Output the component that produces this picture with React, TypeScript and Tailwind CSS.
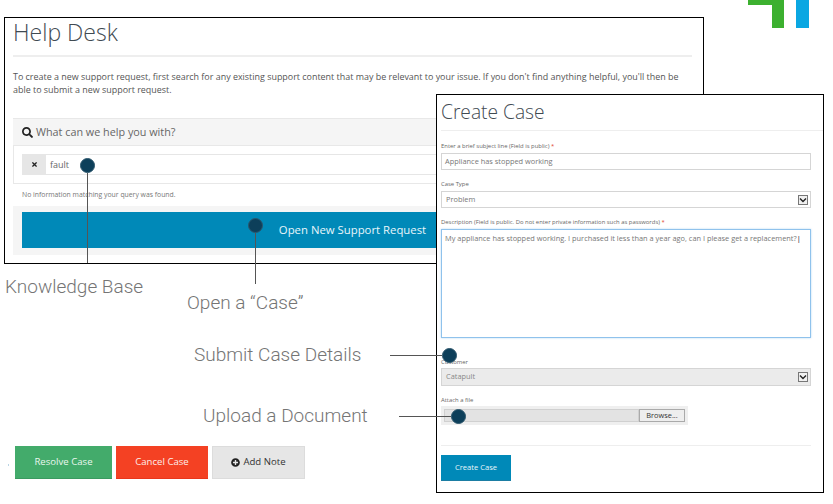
import type { ReactNode } from 'react'
import { FaPlusCircle, FaSearch, FaTimes } from 'react-icons/fa'

const body = { fontFamily: '"Open Sans", sans-serif' }

function Dot() {
  return <div className="size-[15px] shrink-0 rounded-full border border-[#2c566c] bg-[#0d3f5a]" />
}

function CalloutLabel({ children }: { children: string }) {
  return (
    <div className="whitespace-nowrap text-[19px] leading-[24px] font-light text-[#757575]" style={{ fontFamily: 'Roboto, sans-serif' }}>
      {children}
    </div>
  )
}

function FieldLabel({ children, required }: { children: string; required?: boolean }) {
  return (
    <div className="text-[5.9px] leading-[10px] whitespace-nowrap text-[#666]">
      {children} {required && <span className="text-[#e0402a]">*</span>}
    </div>
  )
}

function SelectArrow() {
  return (
    <div className="flex size-[10px] items-center justify-center border border-[#777] bg-[#f0f0f0]">
      <svg viewBox="0 0 8 8" className="size-[8px]">
        <path d="M1 2.5 L4 5.5 L7 2.5" fill="none" stroke="#222" strokeWidth="1.4" />
      </svg>
    </div>
  )
}

function Field({ label, required, className, gap, children }: { label: string; required?: boolean; className: string; gap: string; children: ReactNode }) {
  return (
    <div className={`flex flex-col ${gap} ${className}`}>
      <FieldLabel required={required}>{label}</FieldLabel>
      {children}
    </div>
  )
}

function HelpDesk() {
  return (
    <div className="absolute left-[4px] top-[17px] h-[247px] w-[700px] border border-black bg-white pl-[8px] pr-[11px]">
      <h1 className="h-[37px] text-[23px] leading-[29px] font-light text-[#3f4a52]">Help Desk</h1>
      <div className="h-[2px] bg-[#eeeeee]" />
      <p className="mt-[13px] text-[8.93px] leading-[13px] text-[#555]">
        To create a new support request, first search for any existing support content that may be relevant to your issue. If you don't find anything helpful, you'll then be able to submit a new support request.
      </p>
      <div className="mt-[22px] border-t border-[#e8e8e8] bg-[#f5f5f5]">
        <div className="flex h-[26px] items-center gap-[3px] pl-[9px] text-[10.8px] text-[#666]">
          <FaSearch size={11} className="text-[#222]" />
          What can we help you with?
        </div>
        <div className="h-[39px] border border-[#e8e8e8] bg-white pl-[8px] pt-[8px]">
          <div className="flex h-[21px] border border-[#e6e6e6]">
            <div className="flex w-[23px] items-center justify-center bg-[#e6e6e6]">
              <FaTimes size={7} className="text-[#222]" />
            </div>
            <div className="pl-[4px] text-[9px] leading-[19px] text-[#666]">fault</div>
          </div>
        </div>
        <div className="flex h-[22px] items-center bg-white pl-[9px] text-[6.85px] text-[#777]">
          No information matching your query was found.
        </div>
        <div className="px-[9px] pb-[7px] pt-[6px]">
          <div className="flex h-[36px] items-center justify-center bg-[#0089b8] text-[11.35px] text-[#e8f6fb]">
            Open New Support Request
          </div>
        </div>
      </div>
    </div>
  )
}

function CreateCase() {
  return (
    <div className="absolute left-[436px] top-[94px] flex h-[399px] w-[388px] flex-col border border-black bg-white pl-[4px] pr-[12px]">
      <h1 className="h-[35px] shrink-0 text-[19.2px] leading-[33px] font-light text-[#3f4a52]">Create Case</h1>
      <div className="-mr-[12px] h-px shrink-0 bg-[#eeeeee]" />
      <Field label="Enter a brief subject line (Field is public)" required gap="gap-[2px]" className="mt-[10px]">
        <div className="h-[17px] border border-[#d5d5d5] pl-[3px] text-[7.4px] leading-[15px] text-[#777]">Appliance has stopped working</div>
      </Field>
      <Field label="Case Type" gap="gap-[2px]" className="mt-[9px]">
        <div className="flex h-[17px] items-center justify-between border border-[#d5d5d5] pl-[4px] pr-[2px] text-[7.4px] text-[#777]">
          Problem
          <SelectArrow />
        </div>
      </Field>
      <Field label="Description (Field is public. Do not enter private information such as passwords)" required gap="gap-[2px]" className="mt-[9px]">
        <div className="h-[109px] whitespace-nowrap border border-[#8fc2ec] pl-[3px] pt-px text-[7.4px] leading-[14px] text-[#777] shadow-[0_0_2px_#b7d8f3]">
          My appliance has stopped working. I purchased it less than a year ago, can I please get a replacement?<span className="text-black">|</span>
        </div>
      </Field>
      <Field label="Customer" gap="gap-px" className="mt-[19px]">
        <div className="flex h-[18px] items-center justify-between border border-[#d5d5d5] bg-[#ebebeb] pl-[4px] pr-[2px] text-[7.4px] text-[#888]">
          Catapult
          <SelectArrow />
        </div>
      </Field>
      <Field label="Attach a file" gap="gap-px" className="mt-[9px]">
        <div className="flex h-[19px] w-[247px] items-center bg-[#efefef] pl-[3px]">
          <div className="h-[13px] w-[195px] border border-[#d0d0d0] bg-[#e3e3e3]" />
          <div className="flex h-[13px] w-[46px] items-center justify-center border border-[#aaa] bg-[#eeeeee] text-[7.4px] text-[#333]">Browse...</div>
        </div>
      </Field>
      <div className="mt-[20px] h-px shrink-0 bg-[#eeeeee]" />
      <div className="mt-[9px] flex h-[26px] w-[70px] items-center justify-center border-b border-[#1b7da3] bg-[#0089b8] text-[7.6px] text-[#e8f6fb]">Create Case</div>
    </div>
  )
}

export default function App() {
  return (
    <div className="relative h-[504px] w-[833px] overflow-hidden bg-white" style={body}>
      {/* logo corner */}
      <svg className="absolute left-[748px] top-0" width="61" height="28" viewBox="0 0 61 28">
        <path d="M0 0 H36 V28 H24 V5 H0 Z" fill="#3cb02f" />
        <rect x="48" y="0" width="13" height="28" fill="#0aa7e2" />
      </svg>

      <HelpDesk />
      <CreateCase />

      {/* callouts: each one a dot, a leader line and a label */}
      <div className="absolute left-[5px] top-[158px] flex flex-col items-start">
        <div className="ml-[75px]"><Dot /></div>
        <div className="ml-[82px] h-[90px] w-px bg-[#555]" />
        <div className="mt-[12px]"><CalloutLabel>Knowledge Base</CalloutLabel></div>
      </div>
      <div className="absolute left-[187px] top-[218px] flex flex-col items-start">
        <div className="ml-[61px]"><Dot /></div>
        <div className="ml-[68px] h-[51px] w-px bg-[#555]" />
        <div className="mt-[7px]"><CalloutLabel>Open a “Case”</CalloutLabel></div>
      </div>
      <div className="absolute left-[194px] top-[343px] flex h-[24px] items-center">
        <div className="w-[167px]"><CalloutLabel>Submit Case Details</CalloutLabel></div>
        <div className="ml-[29px] h-px w-[52px] bg-[#555]" />
        <Dot />
      </div>
      <div className="absolute left-[203px] top-[404px] flex h-[24px] items-center">
        <div className="w-[163px]"><CalloutLabel>Upload a Document</CalloutLabel></div>
        <div className="ml-[33px] h-px w-[52px] bg-[#555]" />
        <Dot />
      </div>

      {/* case action buttons */}
      <div className="absolute left-[8px] top-[446px] flex h-[33px] items-stretch text-[9.6px]">
        <div className="mr-[6px] mt-[18px] h-[2px] w-px bg-[#b9d4e4]" />
        <div className="flex w-[97px] items-center justify-center border-b border-[#3a9a60] bg-[#43ab6b] text-[#e9f7ee]">Resolve Case</div>
        <div className="ml-[4px] flex w-[92px] items-center justify-center border-b border-[#e8361a] bg-[#f44123] text-[#fdeeea]">Cancel Case</div>
        <div className="ml-[4px] flex w-[93px] items-center justify-center gap-[3px] border border-[#dcdcdc] bg-[#e6e6e6] text-[#333]">
          <FaPlusCircle size={9} className="text-[#222]" />
          Add Note
        </div>
      </div>
    </div>
  )
}
